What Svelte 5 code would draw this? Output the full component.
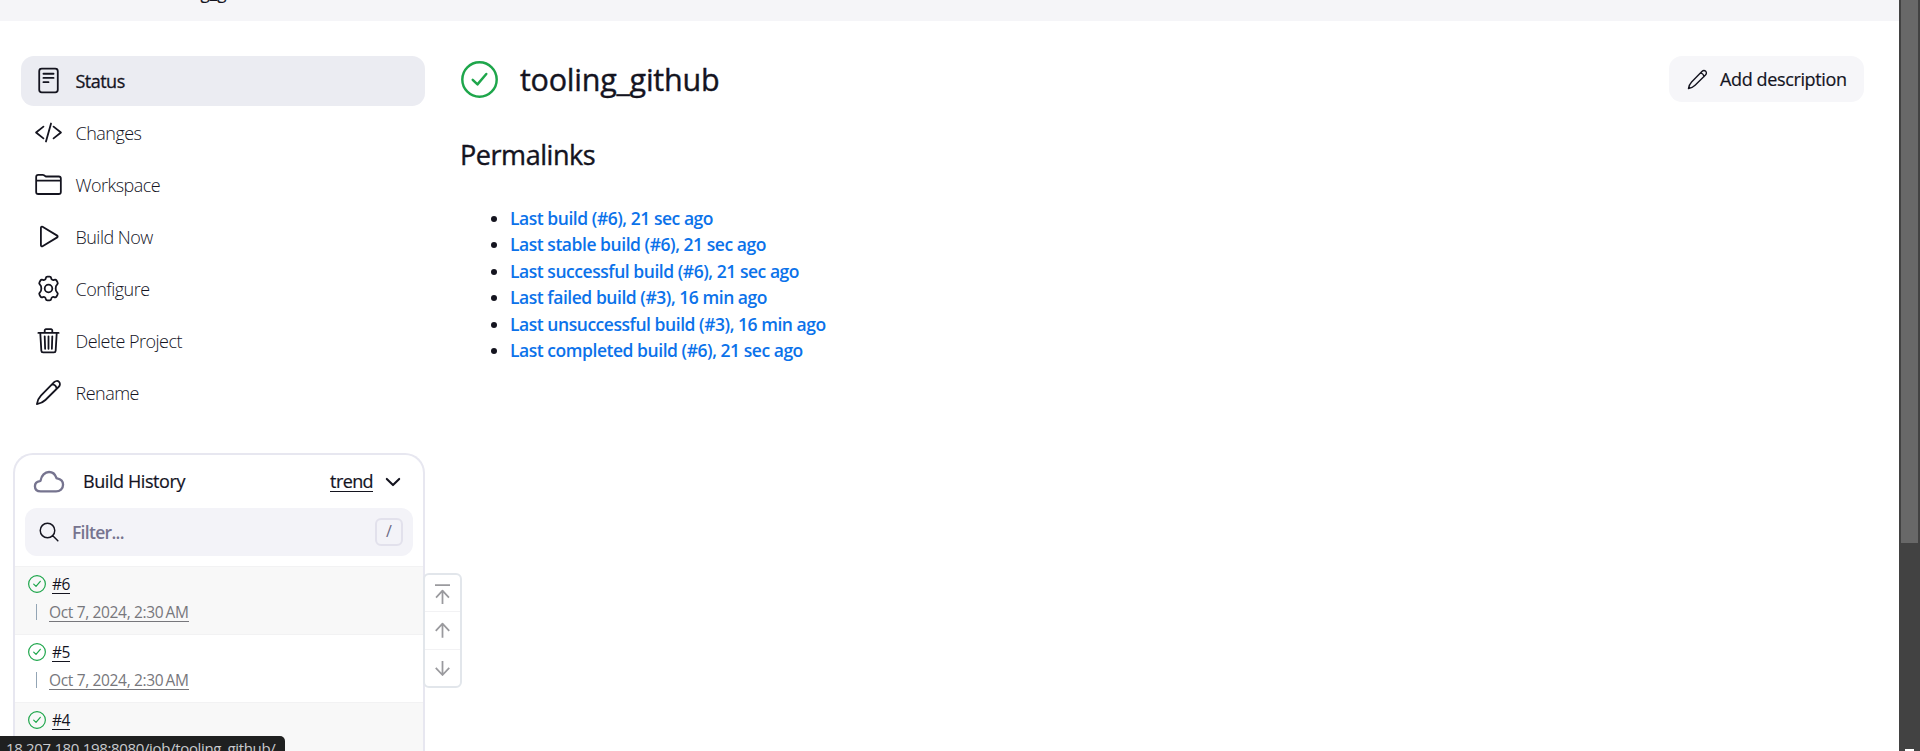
<script>
  const tasks = [
    { label: 'Status', icon: 'status', active: true },
    { label: 'Changes', icon: 'changes' },
    { label: 'Workspace', icon: 'folder' },
    { label: 'Build Now', icon: 'play' },
    { label: 'Configure', icon: 'gear' },
    { label: 'Delete Project', icon: 'trash' },
    { label: 'Rename', icon: 'pencil' }
  ];
  const links = [
    'Last build (#6), 21 sec ago',
    'Last stable build (#6), 21 sec ago',
    'Last successful build (#6), 21 sec ago',
    'Last failed build (#3), 16 min ago',
    'Last unsuccessful build (#3), 16 min ago',
    'Last completed build (#6), 21 sec ago'
  ];
  const builds = ['#6', '#5', '#4'];
  const date = 'Oct 7, 2024, 2:30\u2009AM';
</script>

{#snippet glyph(name, size)}
  <svg class="glyph" width={size} height={size} viewBox="0 0 512 512" fill="none" stroke="currentColor" stroke-width="34" stroke-linecap="round" stroke-linejoin="round">
    {#if name === 'status'}
      <rect x="80" y="32" width="352" height="448" rx="48" />
      <path d="M160 128h192M160 208h192M160 288h96" />
    {:else if name === 'changes'}
      <path d="M160 368L20 256l140-112M352 368l140-112-140-112M304 86l-96 340" />
    {:else if name === 'folder'}
      <path d="M450 436H62a40 40 0 01-40-40V112a40 40 0 0140-40h85.89a40 40 0 0122.19 6.72l27.84 18.56a40 40 0 0022.19 6.72H450a40 40 0 0140 40v252a40 40 0 01-40 40zM22 184h468" />
    {:else if name === 'play'}
      <path d="M112 91v330c0 17.44 17 28.52 31 20.16l277.9-168.37c12.12-7.25 12.12-26.33 0-33.58L143 70.84c-14-8.36-31 2.72-31 20.16z" />
    {:else if name === 'gear'}
      <circle cx="256" cy="256" r="72" />
      <path d="M204 62C208 38 218 30 236 30h40c18 0 28 8 32 32 4 28 28 40 54 30 22-9 37-4 46 12l20 36c9 16 6 29-12 44-24 18-24 36-24 72s0 54 24 72c18 15 21 28 12 44l-20 36c-9 16-24 21-46 12-26-10-50 2-54 30-4 24-14 32-32 32h-40c-18 0-28-8-32-32-4-28-28-40-54-30-22 9-37 4-46-12l-20-36c-9-16-6-29 12-44 24-18 24-36 24-72s0-54-24-72c-18-15-21-28-12-44l20-36c9-16 24-21 46-12 26 10 50-2 54-30z" />
    {:else if name === 'trash'}
      <path d="M100 112l20 336c.95 18.49 14.4 32 32 32h208c17.67 0 30.87-13.51 32-32l20-336M64 112h384M184 112V66a23.93 23.93 0 0124-24h96a23.93 23.93 0 0124 24v46M256 176v238M184 176l8 238M328 176l-8 238" />
    {:else if name === 'pencil'}
      <path d="M36 476c10-58 37-120 76-160L363 60c24-24 67-31 93-6 26 26 20 69-5 93L197 398c-41 41-102 67-161 78zM322 100c48 3 85 39 89 88" />
    {:else if name === 'cloud'}
      <path stroke-width="40" d="M100.18 241.19a15.93 15.93 0 0013.37-13.25C126.6 145.59 186.34 86 256 86c64.69 0 107.79 47.36 124.92 97a16.11 16.11 0 0012.53 10.18C449.36 202.06 496 239.21 496 304c0 66-54 112-120 112H116c-55 0-100-27.44-100-88 0-54.43 43.89-80.81 84.18-86.81z" />
    {:else if name === 'search'}
      <path d="M221.09 52a169.09 169.09 0 10169.09 169.09A169.1 169.1 0 00221.09 52zM344 344L462 462" />
    {:else if name === 'chevron'}
      <path stroke-width="48" d="M112 184l144 144 144-144" />
    {:else if name === 'ok'}
      <circle cx="256" cy="256" r="238" />
      <path d="M350 180L228 324l-66-64" />
    {:else if name === 'top'}
      <path stroke-width="60" stroke-linecap="butt" d="M0 -60h512M256 580V120M36 360L256 124l220 236" />
    {:else if name === 'up'}
      <path stroke-width="60" stroke-linecap="butt" d="M256 500V20M26 270L256 24l230 246" />
    {:else if name === 'down'}
      <path stroke-width="60" stroke-linecap="butt" d="M256 2v480M26 232l230 246 230-246" />
    {/if}
  </svg>
{/snippet}

<div class="screen">
  <div class="page">
    <header><span>tooling_github</span></header>
    <div class="columns">
      <aside>
        <nav>
          {#each tasks as task}
            <a class="task" class:active={task.active} href="#top">
              {@render glyph(task.icon, 27)}<span>{task.label}</span>
            </a>
          {/each}
        </nav>
        <section class="history">
          <div class="heading">
            <span class="cloud">{@render glyph('cloud', 30)}</span>
            <span class="name">Build History</span>
            <a class="trend" href="#trend">trend</a>
            {@render glyph('chevron', 22)}
          </div>
          <div class="filter">
            {@render glyph('search', 22)}
            <span>Filter...</span>
            <kbd>/</kbd>
          </div>
          <div class="builds">
            {#each builds as build}
              <div class="build">
                <div class="number"><span class="green">{@render glyph('ok', 18)}</span><a href="#build">{build}</a></div>
                <div class="when"><i></i><a href="#build">{date}</a></div>
              </div>
            {/each}
          </div>
          <div class="pager">
            <div>{@render glyph('top', 15)}</div>
            <div>{@render glyph('up', 15)}</div>
            <div>{@render glyph('down', 15)}</div>
          </div>
        </section>
      </aside>
      <main>
        <div class="titlebar">
          <span class="green">{@render glyph('ok', 37)}</span>
          <h1>tooling_github</h1>
          <button>{@render glyph('pencil', 21)}<span>Add description</span></button>
        </div>
        <h2>Permalinks</h2>
        <ul>
          {#each links as link}
            <li><a href="#link">{link}</a></li>
          {/each}
        </ul>
      </main>
    </div>
  </div>
  <div class="scrollbar"><div class="thumb"></div><div class="arrow"></div></div>
  <div class="address">18.207.180.198:8080/job/tooling_github/</div>
</div>

<style>
  :global(body) { overflow: hidden; }
  .screen { display: flex; position: relative; width: 1920px; height: 751px; overflow: hidden; background: #fff; color: #14141f; font-family: "Open Sans", "Noto Sans", sans-serif; font-size: 18px; }
  .screen * { box-sizing: border-box; }
  a { color: inherit; text-decoration: none; }
  .glyph { display: block; flex: none; overflow: visible; }
  .page { width: 1899px; }
  header { display: flex; align-items: flex-end; height: 21px; padding-left: 155px; background: #f5f5f8; overflow: hidden; }
  header span { line-height: 20px; font-size: 17px; margin-bottom: 18px; -webkit-text-stroke: 0.2px; }
  .columns { display: flex; height: 730px; }
  aside { width: 425px; flex: none; padding-top: 35px; }
  nav { display: flex; flex-direction: column; gap: 2px; padding-left: 21px; }
  .task { display: flex; align-items: center; gap: 13.5px; height: 50px; padding-left: 14px; border-radius: 13px; font-weight: 300; letter-spacing: -0.52px; }
  .task .glyph { margin-top: -1px; }
  .task.active { background: #ebecf2; font-weight: 400; -webkit-text-stroke: 0.3px; }
  .history { position: relative; height: 338px; margin: 35px 0 0 13px; border: 2px solid #e7e7f0; border-bottom: 0; border-radius: 20px 20px 0 0; }
  .heading { display: flex; align-items: center; height: 53px; padding: 0 19px; letter-spacing: -0.42px; }
  .cloud { color: #76748f; }
  .name { flex: 1; margin: -2px 0 0 19px; -webkit-text-stroke: 0.2px; }
  .trend { margin-right: 9px; line-height: 19px; border-bottom: 1px solid; letter-spacing: -0.6px; -webkit-text-stroke: 0.2px; }
  .filter { display: flex; align-items: center; height: 48px; margin: 0 10px; padding: 0 10px 0 13px; border-radius: 12px; background: #f3f3f8; }
  .filter span { flex: 1; margin-left: 12px; color: #76748f; font-weight: 600; font-size: 17.5px; letter-spacing: -0.7px; }
  kbd { width: 28px; height: 28px; border: 2px solid #e2e1ec; border-radius: 6px; text-align: center; line-height: 23px; font-family: inherit; font-size: 16px; color: #6c6a85; }
  .builds { margin-top: 10px; }
  .build { height: 68px; padding: 7px 0 0 13px; border-top: 1px solid #f2f2f3; font-size: 15.5px; }
  .build:nth-child(odd) { background: #f8f8f8; }
  .number { display: flex; align-items: center; gap: 6px; height: 20px; }
  .number a, .when a { line-height: 18px; border-bottom: 1px solid; }
  .number a { letter-spacing: -0.5px; }
  .green { color: #1ea64b; }
  .when { display: flex; align-items: center; height: 20px; margin-top: 8px; padding-left: 8px; color: #77777c; }
  .when i { width: 1px; height: 16px; margin-right: 12px; background: #93a5b5; }
  .when a { letter-spacing: -0.34px; }
  .pager { position: absolute; left: 408px; top: 118px; width: 39px; height: 115px; border: 2px solid #e2e6eb; border-radius: 6px; background: #fff; color: #9a9a9e; }
  .pager div { display: flex; justify-content: center; align-items: center; height: 38px; }
  .pager div:first-child { height: 36px; padding-top: 2px; }
  .pager div:last-child { height: 37px; }
  .pager div + div { border-top: 1px solid #f2f2f4; }
  main { flex: 1; padding: 35px 35px 0 36px; }
  .titlebar { display: flex; align-items: center; height: 46px; }
  h1, h2 { margin: 0; font-weight: 400; -webkit-text-stroke: 0.4px; }
  h1 { flex: 1; margin-left: 22px; font-size: 30.5px; letter-spacing: -0.25px; line-height: 46px; }
  button { display: flex; align-items: center; gap: 12px; width: 195px; height: 46px; padding: 0 0 0 18px; border: 0; border-radius: 13px; background: #f6f6f9; color: inherit; font: 400 18px "Open Sans", sans-serif; letter-spacing: -0.37px; white-space: nowrap; -webkit-text-stroke: 0.2px; }
  h2 { margin: 35px 0 0 -1px; font-size: 27px; line-height: 36px; letter-spacing: -0.45px; }
  ul { margin: 32px 0 0; padding-left: 49px; line-height: 26.4px; }
  li a { color: #0b72ea; font-weight: 600; font-size: 17.5px; letter-spacing: -0.46px; }
  .scrollbar { position: relative; width: 21px; background: #424242; }
  .thumb { width: 17px; height: 543px; margin-left: 2px; background: #686868; }
  .arrow { position: absolute; left: 6px; top: 749px; width: 9px; height: 2px; background: #fff; }
  .address { position: absolute; left: 0; top: 736px; width: 285px; height: 24px; padding-left: 6px; border-radius: 0 5px 0 0; background: #1f2020; color: #c9cbce; font-size: 15px; letter-spacing: -0.34px; line-height: 25px; white-space: nowrap; }
</style>
